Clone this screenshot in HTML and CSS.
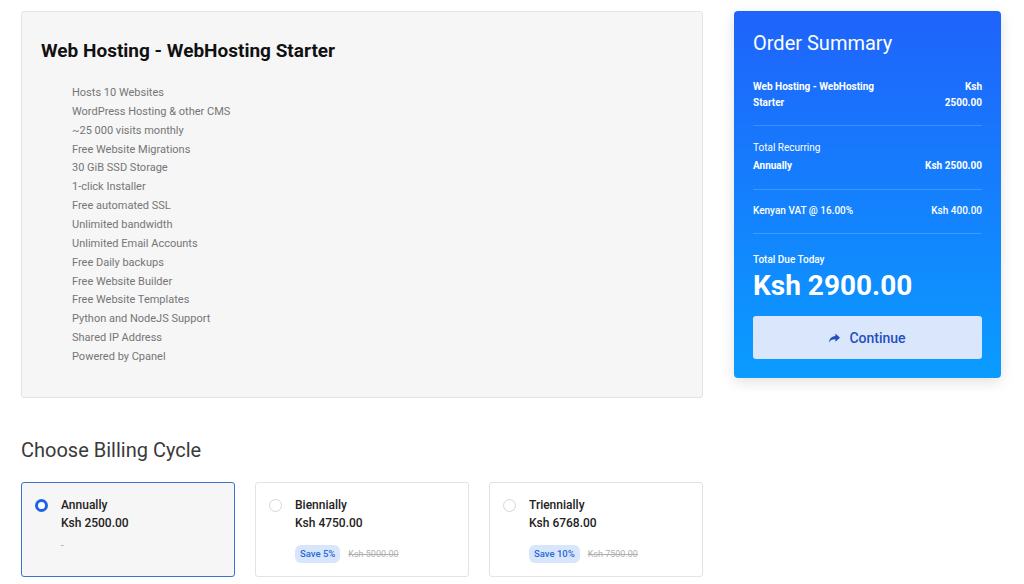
FILE: index.html
```html
<!doctype html>
<html lang="en">
<head>
  <meta charset="UTF-8">
  <meta name="viewport" content="width=device-width, initial-scale=1.0">
  <title>Order Summary</title>
  <link rel="stylesheet" href="styles.css">
</head>
<body>
  <div class="page">
    <div class="main">
      <div class="product">
        <h2 class="product-name">Web Hosting - WebHosting Starter</h2>
        <ul class="features">
          <li>Hosts 10 Websites</li>
          <li>WordPress Hosting &amp; other CMS</li>
          <li>~25 000 visits monthly</li>
          <li>Free Website Migrations</li>
          <li>30 GiB SSD Storage</li>
          <li>1-click Installer</li>
          <li>Free automated SSL</li>
          <li>Unlimited bandwidth</li>
          <li>Unlimited Email Accounts</li>
          <li>Free Daily backups</li>
          <li>Free Website Builder</li>
          <li>Free Website Templates</li>
          <li>Python and NodeJS Support</li>
          <li>Shared IP Address</li>
          <li>Powered by Cpanel</li>
        </ul>
      </div>

      <h3 class="section-title">Choose Billing Cycle</h3>
      <div class="cycles">
        <label class="cycle active">
          <span class="radio"></span>
          <span class="cycle-info">
            <span class="cycle-name">Annually</span>
            <span class="cycle-price">Ksh 2500.00</span>
            <span class="cycle-extra"><span class="dash">-</span></span>
          </span>
        </label>
        <label class="cycle">
          <span class="radio"></span>
          <span class="cycle-info">
            <span class="cycle-name">Biennially</span>
            <span class="cycle-price">Ksh 4750.00</span>
            <span class="cycle-extra">
              <span class="save">Save 5%</span>
              <s class="old-price">Ksh 5000.00</s>
            </span>
          </span>
        </label>
        <label class="cycle">
          <span class="radio"></span>
          <span class="cycle-info">
            <span class="cycle-name">Triennially</span>
            <span class="cycle-price">Ksh 6768.00</span>
            <span class="cycle-extra">
              <span class="save">Save 10%</span>
              <s class="old-price">Ksh 7500.00</s>
            </span>
          </span>
        </label>
      </div>
    </div>

    <div class="summary">
      <h3 class="summary-title">Order Summary</h3>
      <div class="summary-row item">
        <span>Web Hosting - WebHosting<br>Starter</span>
        <span class="amount">Ksh<br>2500.00</span>
      </div>
      <div class="summary-row recurring">
        <div class="label">Total Recurring</div>
        <div class="line">
          <span>Annually</span>
          <span class="amount">Ksh 2500.00</span>
        </div>
      </div>
      <div class="summary-row vat">
        <span>Kenyan VAT @ 16.00%</span>
        <span class="amount">Ksh 400.00</span>
      </div>
      <div class="total">
        <div class="label">Total Due Today</div>
        <div class="total-amount">Ksh 2900.00</div>
      </div>
      <a href="javascript:void(0);" class="btn-continue">
        <svg width="11" height="10" viewBox="0 0 12 10"><path d="M7 0 L12 4.6 L7 9.2 L7 6.4 C3.6 6.3 1.4 7.4 0 9.8 C0.4 5.8 2.6 3.2 7 2.8 Z" fill="currentColor"/></svg>
        Continue
      </a>
    </div>
  </div>
</body>
</html>
```

FILE: styles.css
```css
* {
  margin: 0;
  padding: 0;
  box-sizing: border-box;
}
body {
  background-color: #fff;
  font-family: Roboto, "Liberation Sans", Arial, sans-serif;
  color: #333;
}
.page {
  display: flex;
  align-items: flex-start;
  gap: 31px;
  padding: 11px 0 0 21px;
}
.main {
  width: 682px;
}
.product {
  background-color: #f6f6f6;
  border: 1px solid #e4e4e4;
  border-radius: 3px;
  padding: 28px 19px 30px;
}
.product-name {
  font-size: 19px;
  font-weight: 700;
  line-height: 22px;
  color: #111;
}
.features {
  list-style: none;
  margin-top: 22px;
  padding-left: 31px;
}
.features li {
  font-size: 11px;
  line-height: 18.86px;
  color: #757575;
}
.section-title {
  font-size: 20px;
  font-weight: 400;
  line-height: 24px;
  color: #3a3a3a;
  margin-top: 40px;
}
.cycles {
  display: grid;
  grid-template-columns: repeat(3, 214px);
  gap: 20px;
  margin-top: 20px;
}
.cycle {
  display: flex;
  gap: 13px;
  height: 95px;
  padding: 13px;
  background-color: #fff;
  border: 1px solid #e3e3e3;
  border-radius: 3px;
  cursor: pointer;
}
.cycle.active {
  background-color: #f6f6f6;
  border-color: #3a73d0;
}
.radio {
  flex: none;
  width: 13px;
  height: 13px;
  margin-top: 3px;
  border: 1px solid #d6d6d6;
  border-radius: 50%;
  background-color: #fff;
}
.cycle.active .radio {
  border: 3.5px solid #1d63e6;
}
.cycle-info {
  display: flex;
  flex-direction: column;
}
.cycle-name,
.cycle-price {
  font-size: 12px;
  font-weight: 500;
  line-height: 18px;
  color: #222;
}
.cycle-extra {
  display: flex;
  align-items: center;
  gap: 8px;
  margin-top: 13px;
  height: 18px;
}
.dash {
  font-size: 9px;
  color: #888;
  margin-top: -18px;
}
.save {
  display: block;
  height: 18px;
  font-size: 9.5px;
  font-weight: 500;
  color: #2a68d8;
  background-color: #d8e6fb;
  border-radius: 6px;
  padding: 0 5px;
  line-height: 18px;
}
.old-price {
  font-size: 9px;
  color: #b0b0b0;
}
.summary {
  width: 267px;
  padding: 20px 19px 19px;
  color: #fff;
  background: linear-gradient(to bottom, #1f63fb, #0a9cff);
  border-radius: 4px;
  box-shadow: 0 4px 14px rgba(0, 0, 0, .12);
}
.summary-title {
  font-size: 20px;
  font-weight: 400;
  line-height: 24px;
}
.summary-row {
  display: flex;
  justify-content: space-between;
  font-size: 10px;
  font-weight: 700;
  border-bottom: 1px solid rgba(255, 255, 255, .18);
}
.summary-row .amount {
  text-align: right;
}
.item {
  margin-top: 24px;
  line-height: 16px;
  padding-bottom: 14px;
}
.recurring {
  flex-direction: column;
  padding: 15px 0 16px;
}
.recurring .label {
  font-weight: 400;
  line-height: 14px;
}
.recurring .line {
  display: flex;
  justify-content: space-between;
  line-height: 14px;
  margin-top: 4px;
}
.vat {
  font-weight: 500;
  line-height: 14px;
  padding: 14px 0 15px;
}
.total {
  padding-top: 19px;
}
.total .label {
  font-size: 10px;
  font-weight: 500;
  line-height: 14px;
}
.total-amount {
  font-size: 28px;
  font-weight: 700;
  line-height: 32px;
  margin-top: 3px;
}
.btn-continue {
  display: flex;
  align-items: center;
  justify-content: center;
  gap: 9px;
  height: 43px;
  margin-top: 14px;
  background-color: #dae6fb;
  border-radius: 3px;
  color: #2450bd;
  font-size: 14px;
  font-weight: 500;
  text-decoration: none;
}
```
